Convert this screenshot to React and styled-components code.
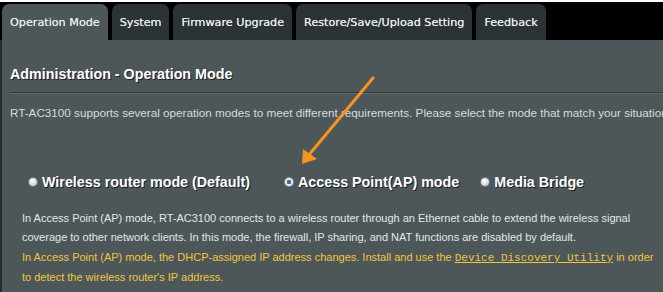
import React from 'react';
import styled, { createGlobalStyle } from 'styled-components';

const GlobalStyle = createGlobalStyle`
  body {
    margin: 0;
    background: #ffffff;
    font-family: "Liberation Sans", Arial, sans-serif;
  }
`;

const Page = styled.div`
  width: 663px;
  height: 292px;
  margin-top: 2px;
  background: #000;
  overflow: hidden;
  position: relative;
`;

const TabBar = styled.div`
  display: flex;
  gap: 4px;
  height: 36px;
  padding: 2px 0 0 2px;
`;

const Tab = styled.div`
  display: flex;
  align-items: center;
  padding: 0 8px;
  border-radius: 7px 7px 0 0;
  background: ${({ active }) => (active ? '#4d5659' : '#2c3337')};
  color: #e6e9ea;
  font-family: "DejaVu Sans", Verdana, sans-serif;
  font-size: 11.2px;
  white-space: nowrap;
  text-shadow: 0 0 0.4px #e6e9ea;
`;

const Panel = styled.div`
  background: #4d5659;
  border-left: 2px solid #262b2e;
  height: 260px;
  padding: 24px 0 0 8px;
`;

const Heading = styled.h1`
  margin: 0;
  font-size: 14.3px;
  line-height: 20px;
  font-weight: bold;
  color: #ffffff;
  text-shadow: 1px 1px 0 #1e2224;
  padding-bottom: 8px;
  border-bottom: 1px solid #363d40;
  box-shadow: 0 1px 0 #5f686b;
`;

const Description = styled.p`
  margin: 12px 0 0;
  font-size: 11.7px;
  line-height: 16px;
  color: #d8dcdd;
  white-space: nowrap;
`;

const ModeRow = styled.div`
  display: flex;
  align-items: center;
  margin: 51px 0 0 19px;
`;

const ModeOption = styled.label`
  display: flex;
  align-items: center;
  gap: 5px;
  margin-right: ${({ space }) => space}px;
  font-size: 14.3px;
  line-height: 20px;
  font-weight: bold;
  color: #ffffff;
  text-shadow: 1px 1px 0 #1b1f21;
  white-space: nowrap;
`;

const Radio = styled.span`
  width: 8px;
  height: 8px;
  border-radius: 50%;
  box-sizing: border-box;
  background: ${({ checked }) =>
    checked
      ? 'radial-gradient(circle, #3a6fa8 0 2px, #e8ecee 2.5px)'
      : 'radial-gradient(circle at 40% 35%, #ffffff, #b9bec0)'};
  box-shadow: 0 0 0 1px ${({ checked }) => (checked ? '#8a9499' : '#6d7679')};
`;

const Info = styled.div`
  margin: 17px 0 0 12px;
  font-size: 11px;
  line-height: 19.4px;
  color: #e4e6e7;
  white-space: nowrap;
`;

const Hint = styled.div`
  color: #f0c83c;
`;

const UtilityLink = styled.span`
  font-family: "Liberation Mono", "Courier New", monospace;
  text-decoration: underline;
  margin-right: 3px;
`;

const ArrowLayer = styled.svg`
  position: absolute;
  left: 0;
  top: 0;
  pointer-events: none;
`;

const tabs = [
  'Operation Mode',
  'System',
  'Firmware Upgrade',
  'Restore/Save/Upload Setting',
  'Feedback',
];

export default function App() {
  return (
    <>
      <GlobalStyle />
      <Page>
        <TabBar>
          {tabs.map((t, i) => (
            <Tab key={t} active={i === 0}>
              {t}
            </Tab>
          ))}
        </TabBar>
        <Panel>
          <Heading>Administration - Operation Mode</Heading>
          <Description>
            RT-AC3100 supports several operation modes to meet different requirements. Please select the mode that match your situation.
          </Description>
          <ModeRow>
            <ModeOption space={35}>
              <Radio />
              Wireless router mode (Default)
            </ModeOption>
            <ModeOption space={22}>
              <Radio checked />
              Access Point(AP) mode
            </ModeOption>
            <ModeOption space={0}>
              <Radio />
              Media Bridge
            </ModeOption>
          </ModeRow>
          <Info>
            <div>
              In Access Point (AP) mode, RT-AC3100 connects to a wireless router through an Ethernet cable to extend the wireless signal
            </div>
            <div>
              coverage to other network clients. In this mode, the firewall, IP sharing, and NAT functions are disabled by default.
            </div>
            <Hint>
              In Access Point (AP) mode, the DHCP-assigned IP address changes. Install and use the{' '}
              <UtilityLink>Device Discovery Utility</UtilityLink>in order
            </Hint>
            <Hint>to detect the wireless router's IP address.</Hint>
          </Info>
        </Panel>
        <ArrowLayer width="663" height="292" viewBox="0 0 663 292">
          <line x1="373" y1="76" x2="308" y2="154" stroke="#f7941d" strokeWidth="3" strokeLinecap="round" />
          <polygon points="302,162 303,147 317,157" fill="#f7941d" />
        </ArrowLayer>
      </Page>
    </>
  );
}
